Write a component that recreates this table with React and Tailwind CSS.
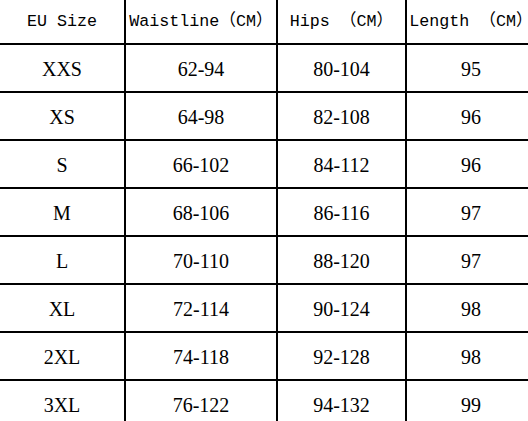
import React from "react";

const HEAD = ["EU Size", "Waistline（CM）", "Hips （CM）", "Length （CM）"];

const ROWS = [
  ["XXS", "62-94", "80-104", "95"],
  ["XS", "64-98", "82-108", "96"],
  ["S", "66-102", "84-112", "96"],
  ["M", "68-106", "86-116", "97"],
  ["L", "70-110", "88-120", "97"],
  ["XL", "72-114", "90-124", "98"],
  ["2XL", "74-118", "92-128", "98"],
  ["3XL", "76-122", "94-132", "99"],
];

// column widths incl. the 2px right border
const COLS = ["w-[126px]", "w-[152px]", "w-[129px]", "w-[128px]"];

export default function App() {
  return (
    <div className="w-[528px] h-[421px] overflow-hidden bg-white text-black">
      <div className="w-[535px]">
        {/* Header */}
        <div className="flex h-[45px] border-b-2 border-black">
          {HEAD.map((h, i) => (
            <div
              key={h}
              className={`${COLS[i]} shrink-0 flex items-center justify-center overflow-visible whitespace-nowrap ${i < 3 ? "border-r-2 border-black" : ""} text-[16.7px] font-['Liberation_Mono','Noto_Sans_CJK_SC',monospace]`}
            >
              {h}
            </div>
          ))}
        </div>

        {/* Rows */}
        {ROWS.map((r) => (
          <div key={r[0]} className="flex h-[48px] border-b-2 border-black">
            {r.map((c, i) => (
              <div
                key={i}
                className={`${COLS[i]} shrink-0 flex items-center justify-center pt-[2px] ${i < 3 ? "border-r-2 border-black" : ""} text-[20px] font-['Liberation_Serif',serif]`}
              >
                {c}
              </div>
            ))}
          </div>
        ))}
      </div>
    </div>
  );
}
